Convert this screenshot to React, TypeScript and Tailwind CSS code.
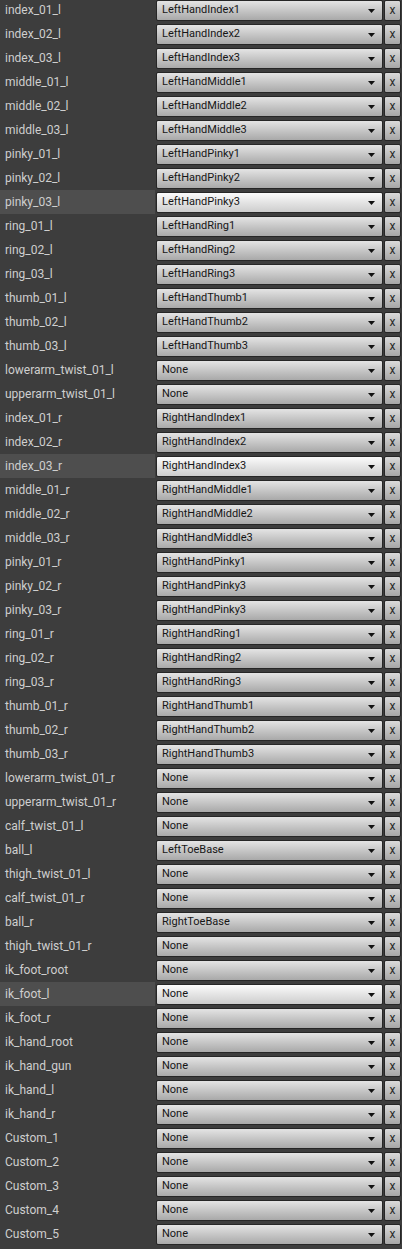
import React from "react";

const rows: [string, string][] = [
  ["index_01_l", "LeftHandIndex1"],
  ["index_02_l", "LeftHandIndex2"],
  ["index_03_l", "LeftHandIndex3"],
  ["middle_01_l", "LeftHandMiddle1"],
  ["middle_02_l", "LeftHandMiddle2"],
  ["middle_03_l", "LeftHandMiddle3"],
  ["pinky_01_l", "LeftHandPinky1"],
  ["pinky_02_l", "LeftHandPinky2"],
  ["pinky_03_l", "LeftHandPinky3"],
  ["ring_01_l", "LeftHandRing1"],
  ["ring_02_l", "LeftHandRing2"],
  ["ring_03_l", "LeftHandRing3"],
  ["thumb_01_l", "LeftHandThumb1"],
  ["thumb_02_l", "LeftHandThumb2"],
  ["thumb_03_l", "LeftHandThumb3"],
  ["lowerarm_twist_01_l", "None"],
  ["upperarm_twist_01_l", "None"],
  ["index_01_r", "RightHandIndex1"],
  ["index_02_r", "RightHandIndex2"],
  ["index_03_r", "RightHandIndex3"],
  ["middle_01_r", "RightHandMiddle1"],
  ["middle_02_r", "RightHandMiddle2"],
  ["middle_03_r", "RightHandMiddle3"],
  ["pinky_01_r", "RightHandPinky1"],
  ["pinky_02_r", "RightHandPinky3"],
  ["pinky_03_r", "RightHandPinky3"],
  ["ring_01_r", "RightHandRing1"],
  ["ring_02_r", "RightHandRing2"],
  ["ring_03_r", "RightHandRing3"],
  ["thumb_01_r", "RightHandThumb1"],
  ["thumb_02_r", "RightHandThumb2"],
  ["thumb_03_r", "RightHandThumb3"],
  ["lowerarm_twist_01_r", "None"],
  ["upperarm_twist_01_r", "None"],
  ["calf_twist_01_l", "None"],
  ["ball_l", "LeftToeBase"],
  ["thigh_twist_01_l", "None"],
  ["calf_twist_01_r", "None"],
  ["ball_r", "RightToeBase"],
  ["thigh_twist_01_r", "None"],
  ["ik_foot_root", "None"],
  ["ik_foot_l", "None"],
  ["ik_foot_r", "None"],
  ["ik_hand_root", "None"],
  ["ik_hand_gun", "None"],
  ["ik_hand_l", "None"],
  ["ik_hand_r", "None"],
  ["Custom_1", "None"],
  ["Custom_2", "None"],
  ["Custom_3", "None"],
  ["Custom_4", "None"],
  ["Custom_5", "None"],
];

const highlighted = new Set(["pinky_03_l", "index_03_r", "ik_foot_l"]);

function Row({ label, value }: { label: string; value: string }) {
  const hi = highlighted.has(label);
  return (
    <div className="flex h-[24px] items-start">
      <div
        className={
          "flex h-[24px] w-[155px] items-center pl-[5px] text-[12px] text-[#cfcfcf] " +
          (hi ? "bg-[#4e4e4e]" : "")
        }
      >
        {label}
      </div>
      <div className="ml-[1px] mt-[2px] flex gap-[1px]">
        <div
          className={
            "flex h-[21px] w-[227px] items-center justify-between rounded-[2px] border border-[#262626] pl-[5px] pr-[7px] text-[11px] text-[#161616] " +
            (hi
              ? "bg-gradient-to-b from-[#fbfbfb] to-[#cdcdcd]"
              : "bg-gradient-to-b from-[#e4e4e4] to-[#a9a9a9]")
          }
        >
          <span>{value}</span>
          <svg width="7" height="4" viewBox="0 0 7 4" className="mt-[1px]">
            <polygon points="0,0 7,0 3.5,4" fill="#111111" />
          </svg>
        </div>
        <div className="flex h-[21px] w-[17px] items-center justify-center rounded-[2px] border border-[#262626] bg-gradient-to-b from-[#dadada] to-[#a6a6a6] pb-[1px] text-[12px] text-[#2a2a2a]">
          x
        </div>
      </div>
    </div>
  );
}

export default function App() {
  return (
    <div
      className="flex h-[1249px] w-[402px] flex-col overflow-hidden bg-[#3d3d3d]"
      style={{ fontFamily: "Roboto, 'Liberation Sans', sans-serif" }}
    >
      <div className="mt-[-2px] flex flex-col">
        {rows.map(([l, v]) => (
          <Row key={l} label={l} value={v} />
        ))}
      </div>
    </div>
  );
}
